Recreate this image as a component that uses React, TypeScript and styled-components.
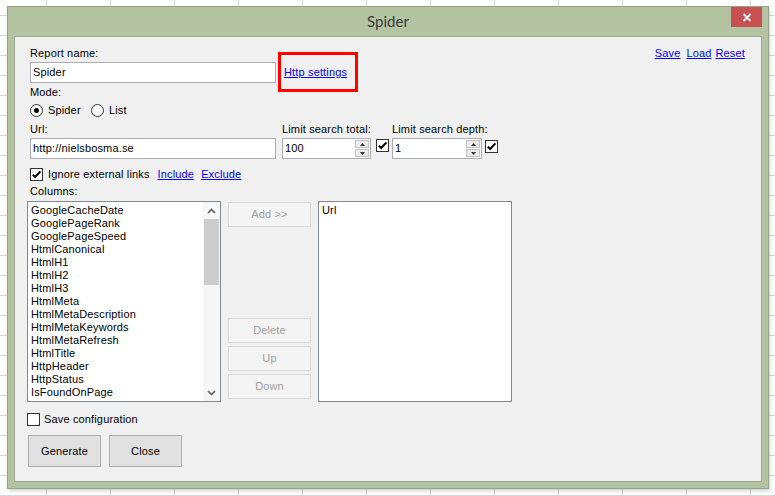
import styled, { createGlobalStyle } from 'styled-components'

const GlobalStyle = createGlobalStyle`
  html, body {
    margin: 0;
    padding: 0;
  }
  body {
    width: 775px;
    height: 496px;
    overflow: hidden;
    background-color: #ffffff;
    background-image:
      linear-gradient(to right, #d8d8d8 1px, transparent 1px),
      linear-gradient(to bottom, #d8d8d8 1px, transparent 1px);
    background-size: 64px 20px;
    background-position: 46px 15px;
    font-family: 'Liberation Sans', Arial, sans-serif;
    font-size: 11px;
    letter-spacing: 0.15px;
    color: #000;
  }
`

const Window = styled.div`
  box-sizing: border-box;
  margin: 6px 0 0 7px;
  width: 762px;
  height: 483px;
  display: flex;
  flex-direction: column;
  padding: 0 6px 6px;
  background: #b4c3a2;
  border: 1px solid #95a285;
  box-shadow: 1px 2px 4px rgba(0, 0, 0, 0.18);
`

const TitleBar = styled.div`
  height: 29px;
  display: grid;
  grid-template-columns: 1fr auto 1fr;
`

const Title = styled.div`
  grid-column: 2;
  font-family: Lato, 'Noto Sans', sans-serif;
  font-size: 15px;
  letter-spacing: 0;
  line-height: 29px;
  color: #3a3a3a;
`

const CloseButton = styled.div`
  grid-column: 3;
  justify-self: end;
  width: 31px;
  height: 20px;
  background: #c75050;
  display: flex;
  align-items: center;
  justify-content: center;
`

const Client = styled.div`
  flex: 1;
  display: flex;
  flex-direction: column;
  padding: 10px 16px 0 12px;
  background: #f0f0f0;
  border: 1px solid #9eab90;
`

const Section = styled.div`
  margin-left: 3px;
  display: flex;
  flex-direction: column;
`

const Row = styled.div<{ $top?: number; $gap?: number }>`
  display: flex;
  align-items: flex-start;
  margin-top: ${p => p.$top ?? 0}px;
  gap: ${p => p.$gap ?? 0}px;
`

const Field = styled.div<{ $width?: number }>`
  display: flex;
  flex-direction: column;
  width: ${p => (p.$width ? `${p.$width}px` : 'auto')};
`

const Label = styled.div<{ $gap?: number }>`
  line-height: 13px;
  margin-bottom: ${p => p.$gap ?? 0}px;
  white-space: nowrap;
`

const TextBox = styled.div<{ $width: number }>`
  box-sizing: border-box;
  width: ${p => p.$width}px;
  height: 21px;
  background: #ffffff;
  border: 1px solid #abadb3;
  display: flex;
  align-items: center;
  padding-left: 2px;
  line-height: 13px;
`

const HttpBox = styled.div`
  box-sizing: border-box;
  margin: 5px 0 -9px 2px;
  width: 80px;
  height: 40px;
  border: 3px solid #ff0000;
  padding-left: 3px;
  display: flex;
  align-items: center;
`

const Link = styled.span<{ $left?: number }>`
  color: #0000ff;
  text-decoration: underline;
  line-height: 13px;
  white-space: nowrap;
  margin-left: ${p => p.$left ?? 0}px;
`

const TopLinks = styled.div`
  margin-left: auto;
  display: flex;
`

const Option = styled.div<{ $width?: number }>`
  display: flex;
  align-items: center;
  gap: 5px;
  line-height: 13px;
  width: ${p => (p.$width ? `${p.$width}px` : 'auto')};
`

const RadioCircle = styled.div`
  box-sizing: border-box;
  width: 13px;
  height: 13px;
  border-radius: 50%;
  border: 1px solid #333333;
  background: #ffffff;
  display: flex;
  align-items: center;
  justify-content: center;
`

const RadioDot = styled.div`
  width: 5px;
  height: 5px;
  border-radius: 50%;
  background: #000000;
`

const CheckBox = styled.div`
  box-sizing: border-box;
  flex: none;
  width: 13px;
  height: 13px;
  border: 1px solid #333333;
  background: #ffffff;
  display: flex;
  align-items: center;
  justify-content: center;
`

const Spinner = styled.div`
  margin-left: auto;
  margin-right: 1px;
  display: flex;
  flex-direction: column;
  gap: 1px;
`

const SpinButton = styled.div`
  box-sizing: border-box;
  width: 14px;
  height: 8px;
  background: #ececec;
  border: 1px solid #c3c3c3;
  display: flex;
  align-items: center;
  justify-content: center;
`

const ListsRow = styled.div`
  display: flex;
  gap: 7px;
  margin-top: 3px;
  height: 201px;
`

const ListBox = styled.div`
  box-sizing: border-box;
  width: 194px;
  height: 100%;
  background: #ffffff;
  border: 1px solid #828790;
  display: flex;
  overflow: hidden;
`

const Items = styled.div`
  flex: 1;
  padding: 2px 0 0 3px;
  display: flex;
  flex-direction: column;
`

const Item = styled.div`
  line-height: 13px;
  white-space: nowrap;
`

const ScrollBar = styled.div`
  width: 17px;
  display: flex;
  flex-direction: column;
  background: #f7f7f7;
`

const ScrollArrow = styled.div`
  height: 17px;
  display: flex;
  align-items: center;
  justify-content: center;
`

const ScrollTrack = styled.div`
  flex: 1;
  display: flex;
  justify-content: center;
`

const Thumb = styled.div`
  width: 15px;
  height: 66px;
  background: #cdcdcd;
`

const ButtonColumn = styled.div`
  width: 83px;
  display: flex;
  flex-direction: column;
  gap: 3px;
  padding-top: 1px;
`

const FlatButton = styled.div<{ $disabled?: boolean; $width?: number; $height?: number }>`
  box-sizing: border-box;
  width: ${p => p.$width ?? 83}px;
  height: ${p => p.$height ?? 25}px;
  display: flex;
  align-items: center;
  justify-content: center;
  background: ${p => (p.$disabled ? '#f4f4f4' : '#e1e1e1')};
  border: 1px solid ${p => (p.$disabled ? '#d9d9d9' : '#adadad')};
  color: ${p => (p.$disabled ? '#a0a0a0' : '#000000')};
  line-height: 13px;
`

const Spacer = styled.div`
  flex: 1;
`

const Check = () => (
  <svg width="11" height="11" viewBox="0 0 11 11">
    <path d="M1.8 5.6 L4.2 8 L9.4 2.4" fill="none" stroke="#000" strokeWidth="2" />
  </svg>
)

const Chevron = ({ up }: { up?: boolean }) => (
  <svg width="9" height="6" viewBox="0 0 9 6">
    <path d={up ? 'M1 5 L4.5 1.5 L8 5' : 'M1 1 L4.5 4.5 L8 1'} fill="none" stroke="#606060" strokeWidth="1.6" />
  </svg>
)

const Triangle = ({ up }: { up?: boolean }) => (
  <svg width="5" height="3" viewBox="0 0 5 3">
    <path d={up ? 'M0 3 L2.5 0 L5 3 Z' : 'M0 0 L2.5 3 L5 0 Z'} fill="#333" />
  </svg>
)

const NumberBox = ({ value, width }: { value: string; width: number }) => (
  <TextBox $width={width}>
    <span>{value}</span>
    <Spinner>
      <SpinButton>
        <Triangle up />
      </SpinButton>
      <SpinButton>
        <Triangle />
      </SpinButton>
    </Spinner>
  </TextBox>
)

const columns = [
  'GoogleCacheDate',
  'GooglePageRank',
  'GooglePageSpeed',
  'HtmlCanonical',
  'HtmlH1',
  'HtmlH2',
  'HtmlH3',
  'HtmlMeta',
  'HtmlMetaDescription',
  'HtmlMetaKeywords',
  'HtmlMetaRefresh',
  'HtmlTitle',
  'HttpHeader',
  'HttpStatus',
  'IsFoundOnPage',
]

export default function App() {
  return (
    <>
      <GlobalStyle />
      <Window>
        <TitleBar>
          <Title>Spider</Title>
          <CloseButton>
            <svg width="10" height="9" viewBox="0 0 10 9">
              <path d="M1.5 1 L8.5 8 M8.5 1 L1.5 8" stroke="#fff" strokeWidth="1.8" />
            </svg>
          </CloseButton>
        </TitleBar>
        <Client>
          <Section>
            <Row>
              <Field $width={246}>
                <Label $gap={2}>Report name:</Label>
                <TextBox $width={246}>Spider</TextBox>
              </Field>
              <HttpBox>
                <Link>Http settings</Link>
              </HttpBox>
              <TopLinks>
                <Link>Save</Link>
                <Link $left={6}>Load</Link>
                <Link $left={4}>Reset</Link>
              </TopLinks>
            </Row>
            <Label style={{ marginTop: 3 }}>Mode:</Label>
            <Row $top={5}>
              <Option $width={61}>
                <RadioCircle>
                  <RadioDot />
                </RadioCircle>
                Spider
              </Option>
              <Option>
                <RadioCircle />
                List
              </Option>
            </Row>
            <Row $top={6} $gap={6}>
              <Field $width={246}>
                <Label $gap={2}>Url:</Label>
                <TextBox $width={246}>http://nielsbosma.se</TextBox>
              </Field>
              <Field>
                <Label $gap={2}>Limit search total:</Label>
                <Row $gap={5}>
                  <NumberBox value="100" width={89} />
                  <Row $top={1}>
                    <CheckBox>
                      <Check />
                    </CheckBox>
                  </Row>
                </Row>
              </Field>
              <Field style={{ marginLeft: -3 }}>
                <Label $gap={2}>Limit search depth:</Label>
                <Row $gap={3}>
                  <NumberBox value="1" width={90} />
                  <Row $top={2}>
                    <CheckBox>
                      <Check />
                    </CheckBox>
                  </Row>
                </Row>
              </Field>
            </Row>
            <Row $top={9} $gap={5} style={{ alignItems: 'center' }}>
              <CheckBox>
                <Check />
              </CheckBox>
              <Label>Ignore external links</Label>
              <Link $left={3}>Include</Link>
              <Link $left={2}>Exclude</Link>
            </Row>
            <Label style={{ marginTop: 4 }}>Columns:</Label>
          </Section>
          <ListsRow>
            <ListBox>
              <Items>
                {columns.map(c => (
                  <Item key={c}>{c}</Item>
                ))}
              </Items>
              <ScrollBar>
                <ScrollArrow>
                  <Chevron up />
                </ScrollArrow>
                <ScrollTrack>
                  <Thumb />
                </ScrollTrack>
                <ScrollArrow>
                  <Chevron />
                </ScrollArrow>
              </ScrollBar>
            </ListBox>
            <ButtonColumn>
              <FlatButton $disabled>Add &gt;&gt;</FlatButton>
              <Spacer />
              <FlatButton $disabled>Delete</FlatButton>
              <FlatButton $disabled>Up</FlatButton>
              <FlatButton $disabled>Down</FlatButton>
              <div style={{ height: 0 }} />
            </ButtonColumn>
            <ListBox>
              <Items>
                <Item>Url</Item>
              </Items>
            </ListBox>
          </ListsRow>
          <Row $top={11} $gap={4} style={{ alignItems: 'center' }}>
            <CheckBox />
            <Label>Save configuration</Label>
          </Row>
          <Row $top={9} $gap={8} style={{ marginLeft: 1 }}>
            <FlatButton $width={73} $height={32}>Generate</FlatButton>
            <FlatButton $width={73} $height={32}>Close</FlatButton>
          </Row>
        </Client>
      </Window>
    </>
  )
}
